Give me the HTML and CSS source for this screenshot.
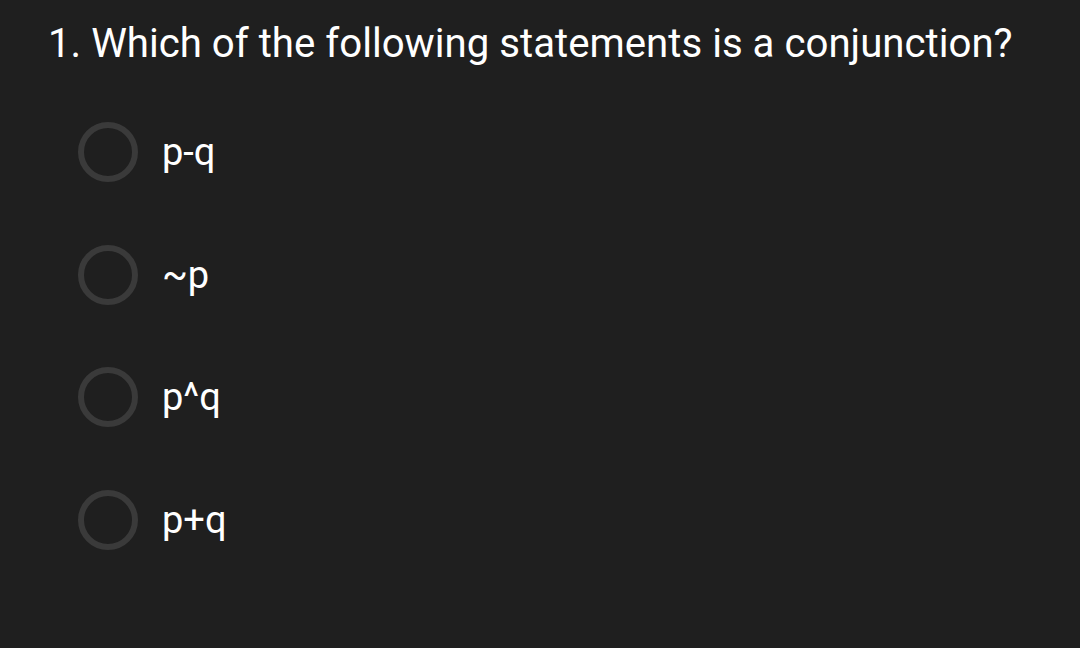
FILE: index.html
```html
<!DOCTYPE html>
<html>
<head>
<meta charset="utf-8">
<link rel="stylesheet" href="styles.css">
</head>
<body>
<div class="quiz">
  <h1 class="question">1. Which of the following statements is a conjunction?</h1>
  <ul class="options">
    <li class="option"><span class="radio"></span><span class="label">p-q</span></li>
    <li class="option"><span class="radio"></span><span class="label">~p</span></li>
    <li class="option"><span class="radio"></span><span class="label">p^q</span></li>
    <li class="option"><span class="radio"></span><span class="label">p+q</span></li>
  </ul>
</div>
</body>
</html>
```
FILE: styles.css
```css
html, body {
  margin: 0;
  padding: 0;
  background: #1f1f1f;
  width: 1080px;
  height: 648px;
  overflow: hidden;
}
.quiz {
  font-family: Roboto, "Noto Sans", sans-serif;
  color: #ffffff;
  padding: 18px 0 0 48px;
}
.question {
  margin: 0;
  font-weight: 400;
  font-size: 40.2px;
  line-height: 52px;
}
.options {
  list-style: none;
  margin: 0;
  padding: 52px 0 0 30px;
  display: flex;
  flex-direction: column;
  gap: 62.5px;
}
.option {
  display: flex;
  align-items: center;
  height: 60px;
  gap: 24px;
}
.radio {
  width: 60px;
  height: 60px;
  box-sizing: border-box;
  border: 6px solid #3a3a3a;
  border-radius: 50%;
  flex: none;
}
.label {
  font-size: 38px;
  line-height: 60px;
}
```
